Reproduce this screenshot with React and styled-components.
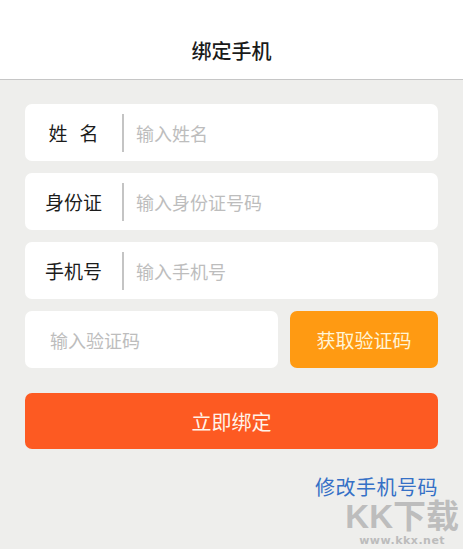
import React from 'react';
import styled, { createGlobalStyle } from 'styled-components';

const GlobalStyle = createGlobalStyle`
  html, body {
    margin: 0;
    padding: 0;
    background: #eeeeec;
    font-family: 'Noto Sans CJK SC', 'Noto Sans', sans-serif;
  }
`;

const Page = styled.div`
  position: relative;
  width: 463px;
  height: 549px;
  overflow: hidden;
  background: #eeeeec;
`;

const Header = styled.header`
  height: 80px;
  box-sizing: border-box;
  padding-top: 38px;
  background: #ffffff;
  border-bottom: 1px solid #c6c6c6;
  text-align: center;
`;

const Title = styled.h1`
  margin: 0;
  font-size: 20px;
  line-height: 26px;
  font-weight: 500;
  color: #1a1a1a;
`;

const Form = styled.div`
  display: flex;
  flex-direction: column;
  gap: 12px;
  padding: 24px 25px 0;
`;

const Card = styled.div`
  display: flex;
  align-items: center;
  height: 57px;
  background: #ffffff;
  border-radius: 7px;
`;

const Label = styled.span`
  width: 97px;
  text-align: center;
  font-size: 19px;
  color: #1c1c1c;
  letter-spacing: ${(p) => (p.$spaced ? '12px' : '0')};
  text-indent: ${(p) => (p.$spaced ? '12px' : '0')};
`;

const Divider = styled.span`
  width: 2px;
  height: 38px;
  background: #c4c4c4;
`;

const Placeholder = styled.span`
  padding-left: ${(p) => p.$pad || 12}px;
  font-size: 18px;
  color: #bdbdbd;
`;

const CodeRow = styled.div`
  display: flex;
  gap: 12px;
  height: 57px;
`;

const CodeInput = styled(Card)`
  flex: 1;
`;

const CodeButton = styled.button`
  width: 148px;
  border: none;
  border-radius: 7px;
  background: #ff9a12;
  color: #fff4d6;
  font-family: inherit;
  font-size: 19px;
`;

const BindButton = styled.button`
  margin-top: 13px;
  height: 56px;
  border: none;
  border-radius: 7px;
  background: #fd5a22;
  color: #fff3e8;
  font-family: inherit;
  font-size: 20px;
`;

const LinkRow = styled.div`
  display: flex;
  justify-content: flex-end;
  margin-top: 15px;
`;

const ChangeLink = styled.a`
  font-size: 20px;
  line-height: 22px;
  color: #3570c6;
  letter-spacing: 0.5px;
`;

const Watermark = styled.div`
  position: absolute;
  right: 4px;
  bottom: 1px;
  display: flex;
  flex-direction: column;
  align-items: center;
  pointer-events: none;
`;

const WmLogo = styled.span`
  font-family: 'Liberation Sans', 'Noto Sans CJK SC', sans-serif;
  font-size: 33px;
  font-weight: 700;
  line-height: 34px;
  color: #bdbdbd;
`;

const WmUrl = styled.span`
  font-family: 'DejaVu Sans', sans-serif;
  font-size: 11px;
  line-height: 14px;
  font-weight: 700;
  letter-spacing: 0.5px;
  color: #bcbcbc;
`;

const fields = [
  { label: '姓名', placeholder: '输入姓名', spaced: true },
  { label: '身份证', placeholder: '输入身份证号码' },
  { label: '手机号', placeholder: '输入手机号' },
];

const App = () => {
  return (
    <>
      <GlobalStyle />
      <Page>
        <Header>
          <Title>绑定手机</Title>
        </Header>
        <Form>
          {fields.map((f) => (
            <Card key={f.label}>
              <Label $spaced={f.spaced}>{f.label}</Label>
              <Divider />
              <Placeholder>{f.placeholder}</Placeholder>
            </Card>
          ))}
          <CodeRow>
            <CodeInput>
              <Placeholder $pad={25}>输入验证码</Placeholder>
            </CodeInput>
            <CodeButton>获取验证码</CodeButton>
          </CodeRow>
          <BindButton>立即绑定</BindButton>
          <LinkRow>
            <ChangeLink>修改手机号码</ChangeLink>
          </LinkRow>
        </Form>
        <Watermark>
          <WmLogo>KK下载</WmLogo>
          <WmUrl>www.kkx.net</WmUrl>
        </Watermark>
      </Page>
    </>
  );
};

export default App;
